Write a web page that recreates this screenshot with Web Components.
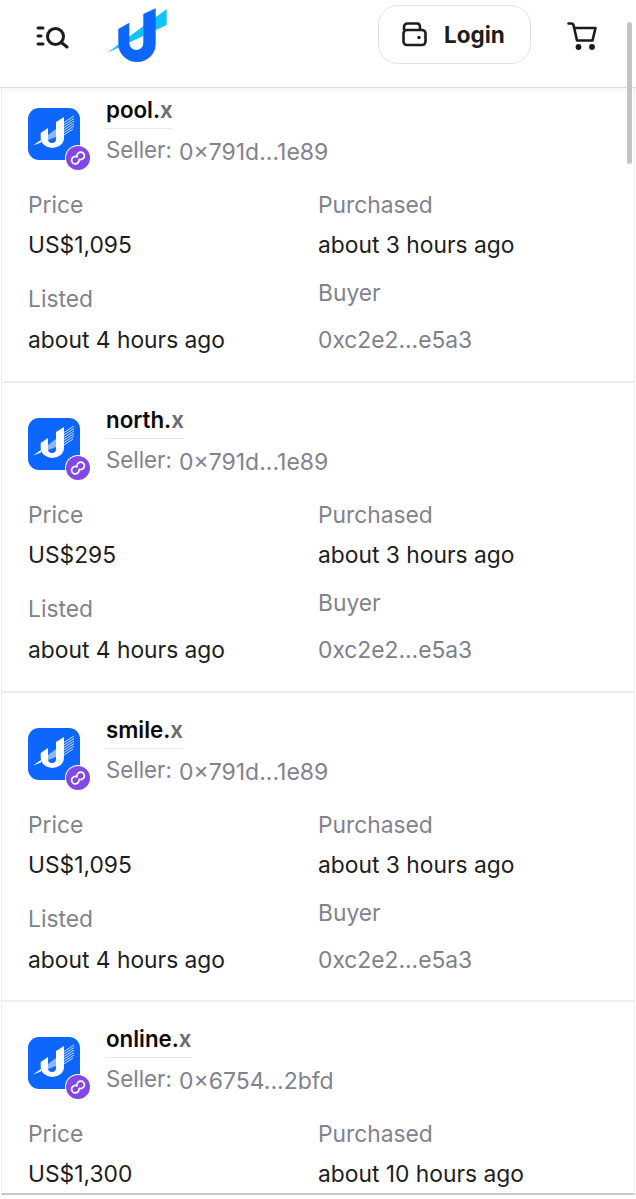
<!DOCTYPE html>
<html>
<head>
<meta charset="utf-8">
<style>
  html, body { margin: 0; padding: 0; background: #fff; }
  body { position: relative; width: 636px; height: 1199px; overflow: hidden; font-family: Inter, "Liberation Sans", sans-serif; }
</style>
</head>
<body>
<template id="logo-tpl">
  <style>:host { display: block; width: 60px; height: 56px; } svg { display: block; }</style>
  <svg width="60" height="56" viewBox="0 0 60 56">
    <path d="M0.300 45.700L59.700 2V18Z" fill="#10c4ff"/>
    <path d="M11.300 22L22.300 15.700V36A7 7 0 0 0 36.300 36V7L48.700 1.300V37A18.700 18 0 0 1 11.300 37Z" fill="#0d67fe"/>
  </svg>
</template>

<template id="header-tpl">
  <style>
    :host { display: flex; align-items: center; height: 88px; box-sizing: border-box; padding: 0 39px 14px 36px; background: #fff; border-bottom: 1px solid #dcdcdc; box-shadow: 0 2px 8px rgba(0,0,0,.05); position: relative; z-index: 2; }
    .menu { display: block; width: 34px; height: 24px; margin-right: 37px; }
    ex-logo { margin-bottom: 3px; }
    .grow { flex: 1; }
    .login { display: flex; align-items: center; gap: 17px; box-sizing: border-box; width: 153px; height: 59px; margin: 0 36px 5px 0; padding-left: 23px; border: 1.500px solid #e2e2e2; border-radius: 20px; font-size: 22.500px; font-weight: 700; color: #1d1d1f; }
    .cart { display: block; width: 30px; height: 28px; margin-bottom: 2px; }
  </style>
  <svg class="menu" viewBox="0 0 34 24" fill="none" stroke="#1b1b1b" stroke-width="3" stroke-linecap="round">
    <path d="M2 3H7M2 11H5M2 19H7"/>
    <circle cx="19.500" cy="11.500" r="8"/>
    <path d="M26 18L31 22"/>
  </svg>
  <ex-logo></ex-logo>
  <div class="grow"></div>
  <div class="login">
    <svg width="25" height="25" viewBox="0 0 25 25" fill="none" stroke="#1d1d1f" stroke-width="2.600" stroke-linejoin="round">
      <path d="M2 8V5C2 3 3.500 1.500 5.500 1.500H15C17 1.500 18 3 18 5V8"/>
      <rect x="1.500" y="8" width="22" height="15" rx="3.500"/>
      <circle cx="17" cy="15.500" r="1.700" fill="#1d1d1f" stroke="none"/>
    </svg>
    <span>Login</span>
  </div>
  <svg class="cart" viewBox="0 0 30 28" fill="none" stroke="#1b1b1b" stroke-width="2.600" stroke-linecap="round" stroke-linejoin="round">
    <path d="M1.500 1.500H4.500C5.500 1.500 6.200 2.200 6.500 3L10 18.500H25.500L28.500 6H7"/>
    <circle cx="11.500" cy="25" r="1.600" fill="#1b1b1b"/>
    <circle cx="25" cy="25" r="1.600" fill="#1b1b1b"/>
  </svg>
</template>

<template id="avatar-tpl">
  <style>
    :host { display: block; position: relative; width: 52px; height: 52px; }
    .tile { display: block; }
    .badge { position: absolute; left: 38px; top: 38px; width: 24px; height: 24px; border-radius: 50%; background: #8247e5; box-shadow: 0 0 0 1px #fff; }
    .badge svg { display: block; }
  </style>
  <svg class="tile" width="52" height="52" viewBox="0 0 52 52">
    <rect width="52" height="52" rx="11" fill="#0d67fe"/>
    <path d="M20 27L28 21V29L20 32Z" fill="#8db8fb"/>
    <path d="M36 14.500L46 8M36 17L46 10.500M36 19.500L46 13M36 22L46 15.500M36 24.500L46 18M36 27L45 21" stroke="#c9dcfd" stroke-width="1"/>
    <path d="M5 37.500L13 32V34.500Z" fill="#fff"/>
    <path d="M12.700 25L20 20V31A4 4 0 0 0 28 31V14L36 9V30A11.650 10 0 0 1 12.700 30Z" fill="#fff"/>
  </svg>
  <div class="badge">
    <svg width="24" height="24" viewBox="0 0 24 24" fill="none" stroke="#fff" stroke-width="1.700" stroke-linecap="round">
      <path d="M11 10.900A3.700 3.700 0 1 0 13 14.200"/>
      <path d="M11 9.800A3.700 3.700 0 1 1 13.400 13.300"/>
    </svg>
  </div>
</template>

<template id="field-tpl">
  <style>
    :host { display: block; }
    .label { color: #82828e; font-size: 22.800px; line-height: 28px; }
    .value { color: #1d1d22; font-size: 22.800px; line-height: 28px; margin-top: var(--value-gap, 12px); }
    :host([muted]) .value { color: #7f7f8a; }
  </style>
  <div class="label"><slot name="label"></slot></div>
  <div class="value"><slot></slot></div>
</template>

<template id="sale-tpl">
  <style>
    :host { display: block; box-sizing: border-box; height: 309.700px; padding: 35px 0 0 26px; border-bottom: 2px solid #eeeef2; }
    .top { display: flex; height: 83px; }
    .who { margin: -12px 0 0 26px; }
    .name { display: inline-block; font-size: 22.300px; font-weight: 600; line-height: 28px; color: #0b0b0d; padding-bottom: 4px; border-bottom: 1.500px solid #e8e8e8; }
    .name span { color: #6b6b70; }
    .seller { display: flex; align-items: baseline; gap: 7px; font-size: 22.300px; line-height: 28px; color: #82828e; margin-top: 7px; }
    .seller b { font-weight: 400; font-size: 23px; position: relative; top: 2px; }
    .grid { display: grid; grid-template-columns: 290px 1fr; }
    .col { display: flex; flex-direction: column; }
    .col ex-field + ex-field { margin-top: 26px; --value-gap: 13px; }
    .right ex-field + ex-field { margin-top: 20px; --value-gap: 19px; }
    :host([cut]) .second { display: none; }
  </style>
  <div class="top">
    <ex-avatar></ex-avatar>
    <div class="who">
      <div class="name" id="name"></div>
      <div class="seller">Seller: <b id="seller"></b></div>
    </div>
  </div>
  <div class="grid">
    <div class="col">
      <ex-field><span slot="label">Price</span><span id="price"></span></ex-field>
      <ex-field class="second"><span slot="label">Listed</span>about 4 hours ago</ex-field>
    </div>
    <div class="col right">
      <ex-field><span slot="label">Purchased</span><span id="bought"></span></ex-field>
      <ex-field class="second" muted><span slot="label">Buyer</span>0xc2e2...e5a3</ex-field>
    </div>
  </div>
</template>

<template id="list-tpl">
  <style>
    :host { display: block; height: 1107px; }
    .frame { box-sizing: border-box; height: 1107px; overflow: hidden; margin: 0 1px; border: solid #eeeef2; border-width: 0 1px; border-bottom: 2px solid #c9c9c9; }
    .rows { margin-top: -14.700px; }
  </style>
  <div class="frame"><div class="rows"><slot></slot></div></div>
</template>

<template id="thumb-tpl">
  <style>
    :host { display: block; position: absolute; left: 627px; top: 22px; width: 5px; height: 142px; border-radius: 3px; background: #c4c4c4; z-index: 3; }
  </style>
</template>

<ex-header></ex-header>
<ex-list>
  <ex-sale name="pool" seller="0×791d...1e89" price="US$1,095" bought="about 3 hours ago"></ex-sale>
  <ex-sale name="north" seller="0×791d...1e89" price="US$295" bought="about 3 hours ago"></ex-sale>
  <ex-sale name="smile" seller="0×791d...1e89" price="US$1,095" bought="about 3 hours ago"></ex-sale>
  <ex-sale cut name="online" seller="0×6754...2bfd" price="US$1,300" bought="about 10 hours ago"></ex-sale>
</ex-list>
<ex-thumb></ex-thumb>

<script>
class Base extends HTMLElement {
  constructor(tplId) {
    super();
    this.attachShadow({ mode: 'open' });
    this.shadowRoot.appendChild(document.getElementById(tplId).content.cloneNode(true));
  }
}

class Logo extends Base { constructor() { super('logo-tpl'); } }
class Header extends Base { constructor() { super('header-tpl'); } }
class Avatar extends Base { constructor() { super('avatar-tpl'); } }
class Field extends Base { constructor() { super('field-tpl'); } }
class List extends Base { constructor() { super('list-tpl'); } }
class Thumb extends Base { constructor() { super('thumb-tpl'); } }

class Sale extends Base {
  constructor() { super('sale-tpl'); }

  connectedCallback() {
    const root = this.shadowRoot;
    root.getElementById('name').innerHTML = `${this.getAttribute('name')}.<span>x</span>`;
    root.getElementById('seller').textContent = this.getAttribute('seller');
    root.getElementById('price').textContent = this.getAttribute('price');
    root.getElementById('bought').textContent = this.getAttribute('bought');
  }
}

customElements.define('ex-logo', Logo);
customElements.define('ex-header', Header);
customElements.define('ex-avatar', Avatar);
customElements.define('ex-field', Field);
customElements.define('ex-list', List);
customElements.define('ex-thumb', Thumb);
customElements.define('ex-sale', Sale);
</script>
</body>
</html>
